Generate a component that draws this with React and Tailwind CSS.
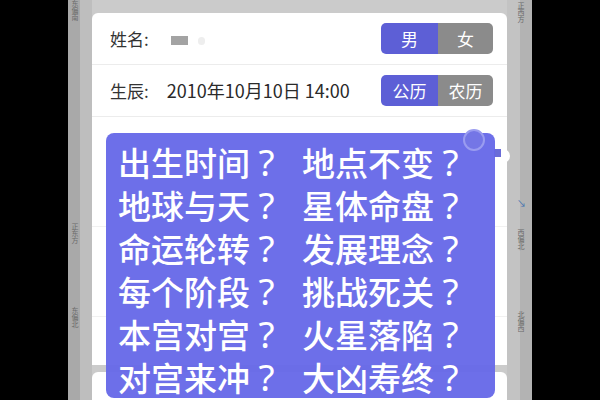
const font = { fontFamily: '"Noto Sans CJK SC", "Noto Sans", sans-serif' };

function Toggle({ left, right }) {
  return (
    <div className="flex h-[31px] w-[112px] overflow-hidden rounded-[5px] text-[17px] text-white">
      <div className="flex w-[57px] items-center justify-center bg-[#5d5fd6]">{left}</div>
      <div className="flex flex-1 items-center justify-center bg-[#8b8b8b]">{right}</div>
    </div>
  );
}

function SideLabel({ text, className }) {
  return (
    <div className={`absolute text-[7px] leading-[8px] text-[#6b6b6b] [writing-mode:vertical-rl] ${className}`}>
      {text}
    </div>
  );
}

// the reference's question mark is tall and centred in a full-width cell
function Phrase({ text }) {
  return (
    <span className="flex items-baseline">
      <span>{text}</span>
      <span
        className="inline-block w-[33px] text-center text-[37px] font-normal leading-[43px]"
        style={{ fontFamily: '"Noto Sans", sans-serif' }}
      >
        ?
      </span>
    </span>
  );
}

const lines = [
  ['出生时间', '地点不变'],
  ['地球与天', '星体命盘'],
  ['命运轮转', '发展理念'],
  ['每个阶段', '挑战死关'],
  ['本宫对宫', '火星落陷'],
  ['对宫来冲', '大凶寿终'],
];

export default function App() {
  return (
    <div className="relative flex h-[400px] w-[600px] overflow-hidden bg-black" style={font}>
      <div className="w-[68px] shrink-0" />

      <div className="flex w-[464px] shrink-0">
        {/* left strip */}
        <div className="relative flex w-[24px] shrink-0">
          <div className="w-[12px] bg-[#a9a9a9]" />
          <div className="w-[12px] bg-[#bebebe]" />
          <SideLabel text="东偏南" className="left-[3px] top-[0px]" />
          <SideLabel text="正东方" className="left-[3px] top-[223px]" />
          <SideLabel text="东偏北" className="left-[3px] top-[307px]" />
        </div>

        {/* content */}
        <div className="flex w-[415px] shrink-0 flex-col bg-[#cbcbcb]">
          <div className="h-[13px] shrink-0" />
          <div className="flex h-[352px] shrink-0 flex-col rounded-t-[6px] bg-white">
            <div className="flex h-[52px] shrink-0 items-center border-b border-[#ececec] pl-[18px] pr-[14px] text-[17px] text-[#333]">
              <span>姓名:</span>
              <div className="ml-[22px] mt-[4px] flex items-center gap-[10px]">
                <div className="h-[9px] w-[17px] bg-[#a3a3a3]" />
                <div className="h-[8px] w-[7px] rounded-sm bg-[#eeeeee]" />
              </div>
              <div className="ml-auto">
                <Toggle left="男" right="女" />
              </div>
            </div>
            <div className="flex h-[52px] shrink-0 items-center border-b border-[#ececec] pl-[18px] pr-[14px] text-[17px] text-[#2a2a2a]">
              <span className="text-[#333]">生辰:</span>
              <span className="ml-[18px] text-[18px]">2010年10月10日 14:00</span>
              <div className="ml-auto">
                <Toggle left="公历" right="农历" />
              </div>
            </div>
            <div className="h-[110px] shrink-0 border-b border-[#f1f1f1]" />
            <div className="h-[90px] shrink-0 border-b border-[#f1f1f1]" />
            <div className="flex-1" />
          </div>
          <div className="h-[7px] shrink-0" />
          <div className="flex-1 rounded-t-[6px] bg-white" />
        </div>

        {/* right strip */}
        <div className="relative flex w-[25px] shrink-0">
          <div className="w-[13px] bg-[#c3c3c3]" />
          <div className="w-[12px] bg-[#b3b3b3]" />
          <SideLabel text="正西方" className="left-[10px] top-[2px]" />
          <div className="absolute left-[10px] top-[199px] text-[9px] leading-[10px] text-[#3b6fb0]">↘</div>
          <SideLabel text="西偏北" className="left-[10px] top-[229px]" />
          <SideLabel text="北偏西" className="left-[10px] top-[311px]" />
        </div>
      </div>

      {/* caption overlay */}
      <div className="absolute left-[495px] top-[149px] h-[14px] w-[15px] rounded-full bg-white" />
      <div className="absolute left-[494px] top-[149px] h-[8px] w-[7px] bg-[#6a6cd8]" />
      <div className="absolute left-[106px] top-[133px] flex h-[265px] w-[389px] flex-col rounded-[8px] bg-[#6567e8]/95 pl-[12px] pt-[7px] text-[33px] font-medium leading-[43px] text-white">
        {lines.map(([a, b], i) => (
          <div key={i} className="flex h-[43px] gap-[19px] whitespace-nowrap">
            <Phrase text={a} />
            <Phrase text={b} />
          </div>
        ))}
      </div>
      <div className="absolute left-[463px] top-[129px] h-[22px] w-[22px] rounded-full border-2 border-[#9a9cf0] bg-[#7476e6]" />
    </div>
  );
}
